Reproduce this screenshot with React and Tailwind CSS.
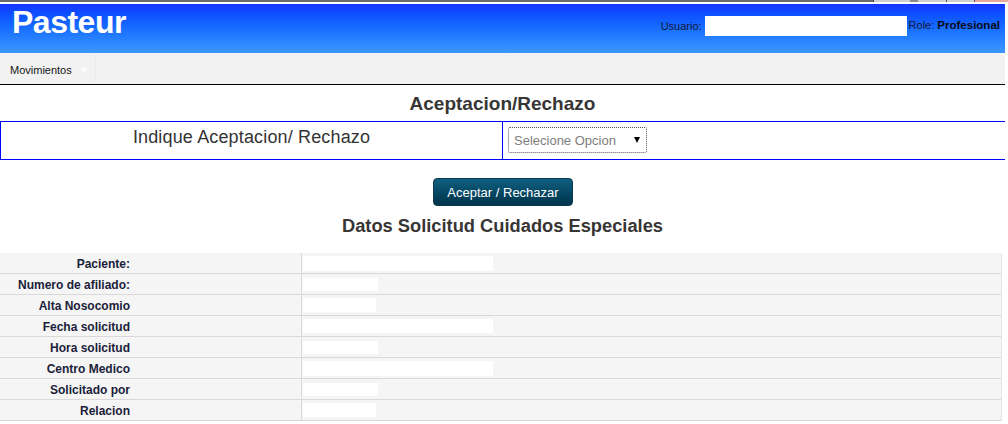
export default function App() {
  const rows = [
    { label: "Paciente:", w: "w-[190px]", h: "h-[15px]" },
    { label: "Numero de afiliado:", w: "w-[75px]", h: "h-[13px]" },
    { label: "Alta Nosocomio", w: "w-[73px]", h: "h-[14px]" },
    { label: "Fecha solicitud", w: "w-[190px]", h: "h-[14px]" },
    { label: "Hora solicitud", w: "w-[75px]", h: "h-[13px]" },
    { label: "Centro Medico", w: "w-[190px]", h: "h-[15px]" },
    { label: "Solicitado por", w: "w-[75px]", h: "h-[13px]" },
    { label: "Relacion", w: "w-[73px]", h: "h-[14px]" },
  ];

  return (
    <div className="w-[1008px] h-[424px] bg-white overflow-hidden font-['Liberation_Sans',Arial,sans-serif]">
      {/* top strip */}
      <div className="flex h-[2px]">
        <div className="w-[873px] bg-[#6a6a6a]" />
        <div className="w-[1px] bg-[#444]" />
        <div className="w-[36px] bg-[#cfcfcf]" />
        <div className="w-[8px] bg-[#8a8a8a]" />
        <div className="w-[28px] bg-[#cfcfcf]" />
        <div className="w-[1px] bg-[#555]" />
        <div className="w-[27px] bg-[#cfcfcf]" />
        <div className="w-[1px] bg-[#555]" />
        <div className="flex-1 bg-[#e8a89c]" />
      </div>
      <div className="h-[2px]" />

      <div className="w-[1005px]">
        {/* header */}
        <div className="h-[49px] flex justify-between items-start bg-gradient-to-b from-[#1433ff] to-[#3b98ff]">
          <div className="pl-[12px] pt-[2px] text-[32px] leading-[32px] font-bold text-white tracking-[-0.5px]">
            Pasteur
          </div>
          <div className="flex items-center mt-[12px] pr-[5px] text-[11px] text-[#14163a]">
            <span>Usuario:</span>
            <div className="ml-[3px] w-[202px] h-[20px] bg-white" />
            <span className="ml-[2px]">
              Role: <span className="font-bold text-[11.5px] text-[#0a0a14]">Profesional</span>
            </span>
          </div>
        </div>

        {/* nav */}
        <div className="h-[31px] bg-[#f2f2f2] flex">
          <div className="w-[96px] h-full flex items-start pl-[10px] pt-[11px] border-r border-[#ececec]">
            <span className="text-[11px] leading-[13px] text-[#141414]">Movimientos</span>
            <span className="ml-[8px] mt-[4px] w-0 h-0 border-x-[4.5px] border-x-transparent border-t-[5px] border-t-[#fdfdfd]" />
          </div>
        </div>
        <div className="h-[1px] bg-black" />

        {/* Aceptacion */}
        <div className="pt-[8px] text-center text-[19px] leading-[22px] font-bold text-[#363636]">
          Aceptacion/Rechazo
        </div>
        <div className="mt-[6px] flex h-[39px] border-y border-[#0000ff]">
          <div className="w-[502px] border-l border-[#0000ff] text-center pt-[5px] text-[18px] leading-[21px] tracking-[0.15px] text-[#333]">
            Indique Aceptacion/ Rechazo
          </div>
          <div className="flex-1 border-l border-[#0000ff] pl-[5px] pt-[5px]">
            <div className="w-[139px] h-[26px] bg-white border border-dotted border-[#555] rounded-[2px] flex items-center justify-between pl-[5px] pr-[6px]">
              <span className="text-[13px] leading-[15px] text-[#7d7d7d]">Selecione Opcion</span>
              <span className="w-0 h-0 border-x-[3px] border-x-transparent border-t-[6px] border-t-black" />
            </div>
          </div>
        </div>

        <div className="mt-[18px] flex justify-center">
          <div className="w-[140px] h-[28px] rounded-[4px] border border-[#0b3a4f] bg-gradient-to-b from-[#0f5f80] to-[#00344b] flex items-center justify-center text-white text-[13px] leading-[15px] pl-[1px]">
            Aceptar / Rechazar
          </div>
        </div>

        <div className="mt-[9px] text-center text-[18.3px] leading-[21px] font-bold text-[#383535]">
          Datos Solicitud Cuidados Especiales
        </div>

        {/* data table */}
        <div className="mt-[17px] w-[1002px] border-r border-[#e6e6e6]">
          {rows.map((r) => (
            <div key={r.label} className="flex h-[21px] border-b border-[#d9d9d9]">
              <div className="w-[301px] bg-[#f5f5f5] flex items-center pt-[2px]">
                <div className="w-[130px] text-right text-[12px] leading-[14px] font-bold text-[#1b1d3a]">
                  {r.label}
                </div>
              </div>
              <div className="w-[1px] bg-[#dcdcdc]" />
              <div className="flex-1 bg-[#f5f5f5] flex items-center pl-[1px]">
                <div className={`${r.w} ${r.h} bg-white`} />
              </div>
            </div>
          ))}
        </div>
      </div>
    </div>
  );
}
